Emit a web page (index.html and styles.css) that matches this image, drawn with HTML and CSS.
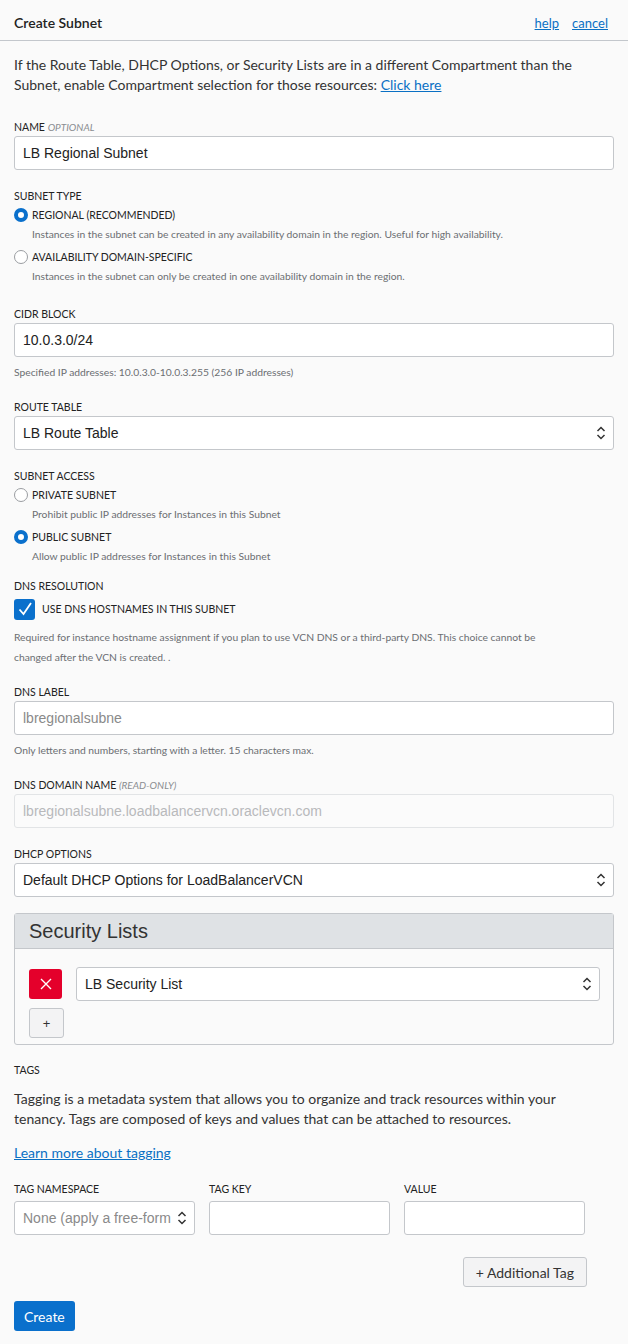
FILE: index.html
```html
<!DOCTYPE html>
<html>
<head>
<meta charset="utf-8">
<link rel="stylesheet" href="styles.css">
</head>
<body>
<div class="header">
  <div class="title">Create Subnet</div>
  <div class="hlinks"><a href="#">help</a><a href="#">cancel</a></div>
</div>
<div class="content">
  <p class="intro">If the Route Table, DHCP Options, or Security Lists are in a different Compartment than the Subnet, enable Compartment selection for those resources: <a href="#">Click here</a></p>

  <div class="field f-name">
    <div class="label">NAME <em>OPTIONAL</em></div>
    <div class="input">LB Regional Subnet</div>
  </div>

  <div class="field f-type">
    <div class="label">SUBNET TYPE</div>
    <div class="radio-row"><span class="radio on"></span><span class="rlabel">REGIONAL (RECOMMENDED)</span></div>
    <div class="rdesc">Instances in the subnet can be created in any availability domain in the region. Useful for high availability.</div>
    <div class="radio-row"><span class="radio"></span><span class="rlabel">AVAILABILITY DOMAIN-SPECIFIC</span></div>
    <div class="rdesc">Instances in the subnet can only be created in one availability domain in the region.</div>
  </div>

  <div class="field f-cidr">
    <div class="label">CIDR BLOCK</div>
    <div class="input">10.0.3.0/24</div>
    <div class="hint">Specified IP addresses: 10.0.3.0-10.0.3.255 (256 IP addresses)</div>
  </div>

  <div class="field f-route">
    <div class="label">ROUTE TABLE</div>
    <div class="input select">LB Route Table<svg class="arrows" viewBox="0 0 10 16" width="10" height="16"><path d="M1.5 6 L5 2.5 L8.5 6 M1.5 10 L5 13.5 L8.5 10" fill="none" stroke="#333" stroke-width="1.5"/></svg></div>
  </div>

  <div class="field f-access">
    <div class="label">SUBNET ACCESS</div>
    <div class="radio-row"><span class="radio"></span><span class="rlabel">PRIVATE SUBNET</span></div>
    <div class="rdesc">Prohibit public IP addresses for Instances in this Subnet</div>
    <div class="radio-row"><span class="radio on"></span><span class="rlabel">PUBLIC SUBNET</span></div>
    <div class="rdesc">Allow public IP addresses for Instances in this Subnet</div>
  </div>

  <div class="field f-dns">
    <div class="label">DNS RESOLUTION</div>
    <div class="check-row"><span class="checkbox"><svg viewBox="0 0 20 20" width="20" height="20"><path d="M4.5 10.5 L8.5 15 L16 4" fill="none" stroke="#fff" stroke-width="1.8"/></svg></span><span class="rlabel">USE DNS HOSTNAMES IN THIS SUBNET</span></div>
    <div class="hint long">Required for instance hostname assignment if you plan to use VCN DNS or a third-party DNS. This choice cannot be changed after the VCN is created. .</div>
  </div>

  <div class="field f-label">
    <div class="label">DNS LABEL</div>
    <div class="input placeholder">lbregionalsubne</div>
    <div class="hint">Only letters and numbers, starting with a letter. 15 characters max.</div>
  </div>

  <div class="field f-domain">
    <div class="label">DNS DOMAIN NAME <em>(READ-ONLY)</em></div>
    <div class="input readonly">lbregionalsubne.loadbalancervcn.oraclevcn.com</div>
  </div>

  <div class="field f-dhcp">
    <div class="label">DHCP OPTIONS</div>
    <div class="input select">Default DHCP Options for LoadBalancerVCN<svg class="arrows" viewBox="0 0 10 16" width="10" height="16"><path d="M1.5 6 L5 2.5 L8.5 6 M1.5 10 L5 13.5 L8.5 10" fill="none" stroke="#333" stroke-width="1.5"/></svg></div>
  </div>

  <div class="panel">
    <div class="panel-head">Security Lists</div>
    <div class="panel-body">
      <div class="sl-row">
        <button class="btn-del"><svg viewBox="0 0 12 12" width="12" height="12"><path d="M1 1 L11 11 M11 1 L1 11" stroke="#fff" stroke-width="1.4"/></svg></button>
        <div class="input select sl-select">LB Security List<svg class="arrows" viewBox="0 0 10 16" width="10" height="16"><path d="M1.5 6 L5 2.5 L8.5 6 M1.5 10 L5 13.5 L8.5 10" fill="none" stroke="#333" stroke-width="1.5"/></svg></div>
      </div>
      <button class="btn-plus">+</button>
    </div>
  </div>

  <div class="tags">
    <div class="label">TAGS</div>
    <p class="tags-text">Tagging is a metadata system that allows you to organize and track resources within your tenancy. Tags are composed of keys and values that can be attached to resources.</p>
    <a class="learn" href="#">Learn more about tagging</a>
    <div class="tag-grid">
      <div class="tag-col">
        <div class="label">TAG NAMESPACE</div>
        <div class="input select tag-ns"><span class="ns-text">None (apply a free-form tag)</span><svg class="arrows" viewBox="0 0 10 16" width="10" height="16"><path d="M1.5 6 L5 2.5 L8.5 6 M1.5 10 L5 13.5 L8.5 10" fill="none" stroke="#333" stroke-width="1.5"/></svg></div>
      </div>
      <div class="tag-col">
        <div class="label">TAG KEY</div>
        <div class="input"></div>
      </div>
      <div class="tag-col">
        <div class="label">VALUE</div>
        <div class="input"></div>
      </div>
    </div>
    <div class="add-row"><button class="btn-add">+ Additional Tag</button></div>
  </div>

  <button class="btn-create">Create</button>
</div>
</body>
</html>
```
FILE: styles.css
```css
* { box-sizing: border-box; }
html, body { margin: 0; padding: 0; }
body {
  background: #fafafa;
  font-family: "Segoe UI", Lato, "Noto Sans", sans-serif;
  color: #333;
  width: 628px;
}
a { color: #0a70c4; text-decoration: underline; }

.header {
  height: 41px;
  border-bottom: 1px solid #c3c7cc;
  display: flex;
  align-items: center;
  justify-content: space-between;
  padding: 5px 20px 0 14px;
}
.title { font-size: 14px; font-weight: 600; color: #222; }
.hlinks { display: flex; gap: 13px; font-size: 13px; }

.content { padding: 14px 14px 14px 14px; }
.intro { margin: 0; font-size: 14px; line-height: 20px; color: #333; }

.label { font-size: 10.5px; line-height: 14px; color: #222; text-transform: uppercase; }
.label em { font-size: 10px; color: #8a8d91; font-style: italic; }

.input {
  margin-top: 2px;
  height: 34px;
  border: 1px solid #c4c7cb;
  border-radius: 3px;
  background: #fff;
  font-family: "Liberation Sans", Arial, sans-serif;
  font-size: 14px;
  line-height: 32px;
  padding: 0 8px;
  color: #222;
}
.input.placeholder { color: #8a8a8a; }
.input.readonly { border-color: #e2e4e6; color: #b8b9bb; background: #fbfbfb; }
.select { display: flex; align-items: center; justify-content: space-between; }
.arrows { flex: none; margin-right: -1px; }

.hint { font-size: 10.3px; color: #6b6e72; margin-top: 8px; line-height: 14px; }
.hint.long { line-height: 20px; margin-top: 7px; max-width: 545px; }

.f-name { margin-top: 25px; }
.f-type { margin-top: 19px; }
.radio-row { display: flex; align-items: center; height: 22px; margin-top: 1px; }
.rdesc + .radio-row { margin-top: 4px; }
.radio {
  width: 14px; height: 14px; border-radius: 50%;
  border: 1px solid #9a9da1; background: #fff;
  margin: 0 4px 0 0; flex: none;
}
.radio.on { border: 4.5px solid #0a70cc; background: #fff; }
.rlabel { font-size: 10.5px; color: #222; }
.rdesc { font-size: 10.3px; color: #6b6e72; padding-left: 18px; line-height: 16px; }

.f-cidr { margin-top: 23px; }
.f-route { margin-top: 21px; }
.f-access { margin-top: 19px; }
.f-access .radio-row:first-of-type { margin-top: 0; }
.f-dns { margin-top: 15px; }
.check-row { display: flex; align-items: center; height: 22px; margin-top: 5px; }
.checkbox {
  width: 21px; height: 21px; border-radius: 3px; background: #0a70cc;
  margin: 0 7px 0 0; display: flex; align-items: center; justify-content: center;
  flex: none;
}
.checkbox svg { display: block; }
.f-label { margin-top: 18px; }
.f-domain { margin-top: 21px; }
.f-dhcp { margin-top: 19px; }

.panel {
  margin-top: 16px;
  border: 1px solid #c4c7cb;
  border-radius: 3px;
  background: #fafafa;
}
.panel-head {
  height: 35px;
  background: #dfe2e5;
  border-bottom: 1px solid #c4c7cb;
  font-family: "Liberation Sans", Arial, sans-serif;
  font-size: 20px;
  line-height: 34px;
  padding-left: 14px;
  color: #333;
}
.panel-body { padding: 18px 13px 6px 14px; }
.sl-row { display: flex; align-items: center; gap: 14px; }
.btn-del {
  width: 33px; height: 30px; border: none; border-radius: 3px;
  background: #e4002b; display: flex; align-items: center; justify-content: center;
  padding: 0; flex: none;
}
.sl-select { flex: 1; margin-top: 0; }
.btn-plus {
  display: block;
  margin-top: 7px;
  width: 35px; height: 30px;
  border: 1px solid #c4c7cb; border-radius: 3px;
  background: #f3f3f4; font-size: 13px; color: #333; padding: 0;
  font-family: "Liberation Sans", Arial, sans-serif;
}

.tags { margin-top: 18px; }
.tags-text { margin: 12px 0 0 0; font-size: 14px; line-height: 20px; color: #333; max-width: 575px; }
.learn { display: block; width: max-content; margin: 14px 0 0 0; font-size: 14px; line-height: 20px; }
.tag-grid { display: flex; gap: 14px; margin-top: 19px; }
.tag-col { width: 181px; }
.tag-col .input { margin-top: 5px; }
.tag-ns { overflow: hidden; }
.ns-text { color: #8a8a8a; white-space: nowrap; overflow: hidden; flex: 1; }
.tag-ns .arrows { margin-left: 4px; }

.add-row { display: flex; justify-content: flex-end; padding-right: 27px; margin-top: 22px; }
.btn-add {
  height: 30px; padding: 0 12px;
  border: 1px solid #c4c7cb; border-radius: 3px;
  background: #f3f3f4; color: #333; font-size: 14px;
  font-family: "Segoe UI", Lato, "Noto Sans", sans-serif;
}
.btn-create {
  display: block;
  margin: 14px 0 0 0;
  height: 30px; padding: 0 10px;
  border: none; border-radius: 3px;
  background: #0a70cc; color: #fff; font-size: 14px;
  font-family: "Segoe UI", Lato, "Noto Sans", sans-serif;
}
```
